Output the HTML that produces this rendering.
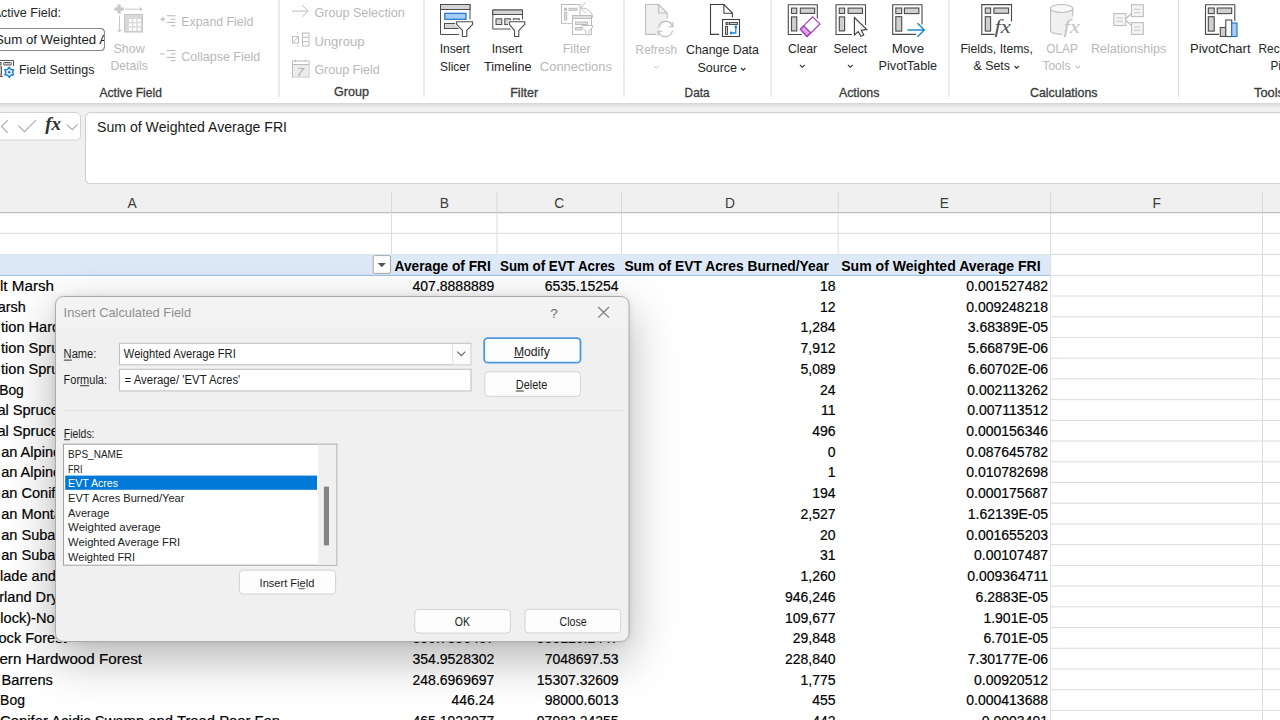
<!DOCTYPE html>
<html><head><meta charset="utf-8"><title>Insert Calculated Field</title>
<style>
html,body{margin:0;padding:0;width:1280px;height:720px;overflow:hidden;background:#fff;}
body{position:relative;font-family:"Liberation Sans", sans-serif;}
.layer{position:absolute;left:0;top:0;width:1280px;height:720px;}
svg text{font-family:"Liberation Sans", sans-serif;}
#shadow{position:absolute;left:55px;top:296px;width:574px;height:346px;border-radius:8px;box-shadow:0 16px 48px rgba(0,0,0,0.30), 0 0 6px rgba(0,0,0,0.10);background:#f0f0f0;}
</style></head><body>
<svg class="layer" width="1280" height="720" viewBox="0 0 1280 720"><rect x="0" y="0" width="1280" height="103" fill="#fff"/><rect x="278.5" y="0" width="1" height="97" fill="#d6d6d6"/><rect x="423.5" y="0" width="1" height="97" fill="#d6d6d6"/><rect x="623.5" y="0" width="1" height="97" fill="#d6d6d6"/><rect x="770.5" y="0" width="1" height="97" fill="#d6d6d6"/><rect x="948.5" y="0" width="1" height="97" fill="#d6d6d6"/><rect x="1178" y="0" width="1" height="97" fill="#d6d6d6"/><text x="-7.3" y="17.4" font-size="13" fill="#262626" textLength="68.3" lengthAdjust="spacingAndGlyphs" >Active Field:</text><rect x="-6" y="28.5" width="110.5" height="22" rx="3.5" fill="#fff" stroke="#8a8a8a" stroke-width="1"/><text x="-5" y="44.4" font-size="13" fill="#1a1a1a" textLength="113" lengthAdjust="spacingAndGlyphs" >Sum of Weighted A</text><rect x="104.5" y="29" width="6" height="21" fill="#fff"/><rect x="-6" y="28.5" width="110.5" height="22" rx="3.5" fill="none" stroke="#8a8a8a" stroke-width="1"/><g fill="none" stroke="#555" stroke-width="1"><path d="M-2 60.5 H13.5 V69"/><path d="M4.4 76.5 H-2"/><rect x="3.5" y="62.5" width="8" height="2.5" rx="1" fill="#d0d0d0"/><rect x="-3" y="62.5" width="4" height="2.5" fill="#d0d0d0"/><rect x="-3" y="67" width="4.5" height="8" fill="#d0d0d0"/></g><rect x="3" y="66" width="12" height="12" fill="#fff"/><polygon points="9.20,67.30 7.55,69.44 4.87,69.80 5.90,72.30 4.87,74.80 7.55,75.16 9.20,77.30 10.85,75.16 13.53,74.80 12.50,72.30 13.53,69.80 10.85,69.44" fill="#fff" stroke="#1a7fd4" stroke-width="1.5" stroke-linejoin="round"/><circle cx="9.2" cy="72.3" r="1.3" fill="#1a7fd4"/><text x="19" y="73.6" font-size="13" fill="#262626" textLength="75.4" lengthAdjust="spacingAndGlyphs" >Field Settings</text><g fill="#c8c8c8"><rect x="117.5" y="4.4" width="3.2" height="9.2"/><rect x="114.4" y="7.4" width="9.4" height="3.2"/><rect x="125.2" y="8.7" width="15" height="1"/><path d="M140 6.8 L142.6 9.2 L140 11.6Z"/><rect x="119" y="15.6" width="1" height="14.5"/><path d="M117 29.8 L119.5 32.4 L122 29.8Z"/></g><g fill="#d9d9d9" stroke="#c4c4c4" stroke-width="1"><rect x="124.5" y="14.5" width="18" height="17.5"/></g><g fill="#fff"><rect x="128.9" y="18.9" width="3" height="3"/><rect x="128.9" y="23.3" width="3" height="3"/><rect x="128.9" y="27.7" width="3" height="3"/><rect x="133.3" y="18.9" width="3" height="3"/><rect x="133.3" y="23.3" width="3" height="3"/><rect x="133.3" y="27.7" width="3" height="3"/><rect x="137.7" y="18.9" width="3" height="3"/><rect x="137.7" y="23.3" width="3" height="3"/><rect x="137.7" y="27.7" width="3" height="3"/></g><text x="113.4" y="53.4" font-size="13" fill="#b8b8b8" textLength="31.3" lengthAdjust="spacingAndGlyphs" >Show</text><text x="110.5" y="70.3" font-size="13" fill="#b8b8b8" textLength="37.3" lengthAdjust="spacingAndGlyphs" >Details</text><g fill="#bcbcbc"><rect x="160.4" y="18.7" width="5" height="1.1"/><rect x="162.4" y="16.7" width="1.1" height="5"/><rect x="166.7" y="15.2" width="8.8" height="1.1"/><rect x="170.9" y="18.7" width="4.6" height="1.1"/><rect x="166.7" y="21.9" width="8.8" height="1.1"/><rect x="170.9" y="25.2" width="4.6" height="1.1"/><rect x="160.2" y="53.4" width="4.3" height="1.1"/><rect x="166.7" y="50" width="8.8" height="1.1"/><rect x="170.9" y="53.4" width="4.6" height="1.1"/><rect x="166.7" y="56.9" width="8.8" height="1.1"/><rect x="170.9" y="60" width="4.6" height="1.1"/></g><text x="181.3" y="26" font-size="13" fill="#b8b8b8" textLength="72" lengthAdjust="spacingAndGlyphs" >Expand Field</text><text x="181.3" y="61.2" font-size="13" fill="#b8b8b8" textLength="79" lengthAdjust="spacingAndGlyphs" >Collapse Field</text><text x="99.5" y="97" font-size="12.2" fill="#3a3a3a" textLength="62.4" lengthAdjust="spacingAndGlyphs" stroke="#3a3a3a" stroke-width="0.3">Active Field</text><g fill="none" stroke="#bdbdbd" stroke-width="1"><path d="M292 11.1 H308.2 M302.2 5.3 L308.2 11.1 L302.2 16.9"/><rect x="292.5" y="36.5" width="6" height="6.5"/><path d="M293 42.5 L298 37"/><path d="M297 33 H299.5 M297 46 H299.5" stroke-dasharray="1.5 1"/><rect x="302.5" y="33" width="6.5" height="13"/><path d="M302.5 37.3 H309 M302.5 41.6 H309"/><rect x="292.5" y="61" width="16.5" height="16"/><path d="M292.5 64.5 H309 M295.5 59.5 V62 M305.5 59.5 V62"/></g><rect x="293" y="65" width="15.5" height="11.5" fill="#ececec"/><text x="296.3" y="75.6" font-size="11" fill="#b0b0b0" font-style="italic" textLength="8" lengthAdjust="spacingAndGlyphs" >7</text><text x="314.4" y="17.4" font-size="13" fill="#b8b8b8" textLength="90.3" lengthAdjust="spacingAndGlyphs" >Group Selection</text><text x="314.4" y="45.8" font-size="13" fill="#b8b8b8" textLength="50" lengthAdjust="spacingAndGlyphs" >Ungroup</text><text x="314.4" y="73.6" font-size="13" fill="#b8b8b8" textLength="65.3" lengthAdjust="spacingAndGlyphs" >Group Field</text><text x="333.9" y="95.8" font-size="12.2" fill="#3a3a3a" textLength="35" lengthAdjust="spacingAndGlyphs" stroke="#3a3a3a" stroke-width="0.3">Group</text><g stroke="#4d4d4d" stroke-width="1"><path d="M459 34.5 H440.5 V4.5 H470 V19.5" fill="#fff"/><rect x="440.5" y="4.5" width="29.5" height="5" fill="#d4d4d4"/><rect x="444.5" y="23.5" width="14" height="5" fill="#d4d4d4"/></g><rect x="444.8" y="13.3" width="21.2" height="6" fill="#a4cdf3" stroke="#1f74cf" stroke-width="1.2"/><path d="M456.6 21.7 H472.6 V24.3 L466.8 30.3 V36.5 H462.4 V30.3 L456.6 24.3 Z" fill="#fff" stroke="#fff" stroke-width="3" stroke-linejoin="round"/><path d="M456.6 21.7 H472.6 V24.3 L466.8 30.3 V36.5 H462.4 V30.3 L456.6 24.3 Z" fill="#fff" stroke="#4d4d4d" stroke-width="1.1" stroke-linejoin="round"/><text x="439.7" y="53.3" font-size="13" fill="#262626" textLength="30.3" lengthAdjust="spacingAndGlyphs" >Insert</text><text x="440" y="70.5" font-size="13" fill="#262626" textLength="30" lengthAdjust="spacingAndGlyphs" >Slicer</text><g stroke="#4d4d4d" stroke-width="1"><path d="M510.5 29 H492.8 V10 H522.5 V19.5" fill="#fff"/><rect x="492.8" y="10" width="29.7" height="4.5" fill="#d4d4d4"/><rect x="496" y="18.8" width="5.8" height="5.7" fill="#d4d4d4"/><rect x="504.8" y="18.8" width="5.5" height="5.7" fill="#d4d4d4"/><rect x="513.3" y="18.8" width="6" height="3" fill="#d4d4d4"/></g><path d="M509.3 21.7 H524.8 V24.3 L518.8 30.3 V36.5 H514.5 V30.3 L509.3 24.3 Z" fill="#fff" stroke="#fff" stroke-width="3" stroke-linejoin="round"/><path d="M509.3 21.7 H524.8 V24.3 L518.8 30.3 V36.5 H514.5 V30.3 L509.3 24.3 Z" fill="#fff" stroke="#4d4d4d" stroke-width="1.1" stroke-linejoin="round"/><text x="491.7" y="53.3" font-size="13" fill="#262626" textLength="30.8" lengthAdjust="spacingAndGlyphs" >Insert</text><text x="484" y="70.5" font-size="13" fill="#262626" textLength="47.6" lengthAdjust="spacingAndGlyphs" >Timeline</text><g stroke="#bdbdbd" stroke-width="1" fill="#fff"><rect x="561.5" y="4.5" width="18.5" height="18.8"/><rect x="564.5" y="8.3" width="2" height="2" fill="#e0e0e0"/><rect x="569" y="8.3" width="8" height="2" fill="#e0e0e0"/><rect x="564.5" y="12.5" width="2.2" height="7.5" fill="#e0e0e0"/><path d="M581 8 A11 11 0 0 1 593 18" fill="none"/><path d="M585.5 2.5 L580.5 8 L585.5 13" fill="none"/><rect x="572.5" y="15.5" width="19" height="19"/><rect x="572.5" y="15.5" width="19" height="3" fill="#e0e0e0"/><rect x="575.5" y="22" width="12" height="2.5" fill="#e0e0e0"/><rect x="575.5" y="27.5" width="6" height="2.5" fill="#e0e0e0"/><path d="M582 25.5 H592.5 V27.5 L589 31 V35 H586 V31 L582 27.5Z"/></g><text x="562.7" y="53.3" font-size="13" fill="#b8b8b8" textLength="27.9" lengthAdjust="spacingAndGlyphs" >Filter</text><text x="539.8" y="70.5" font-size="13" fill="#b8b8b8" textLength="72.2" lengthAdjust="spacingAndGlyphs" >Connections</text><text x="510.2" y="96.8" font-size="12.2" fill="#3a3a3a" textLength="27.9" lengthAdjust="spacingAndGlyphs" stroke="#3a3a3a" stroke-width="0.3">Filter</text><g stroke="#bdbdbd" stroke-width="1.1" fill="none"><path d="M656 34.4 H645.5 V4.5 H658.7 L667.2 13 V18.5" fill="#f0f0f0"/><path d="M658.7 4.5 V13 H667.2"/><path d="M658.5 27.5 A7.2 7.2 0 0 1 672.5 26.5"/><path d="M673 22 V26.8 H668.5"/><path d="M672.5 30.5 A7.2 7.2 0 0 1 658.5 31.5"/><path d="M658 36 V31.2 H662.5"/></g><text x="635.6" y="54.2" font-size="13" fill="#b8b8b8" textLength="41.4" lengthAdjust="spacingAndGlyphs" >Refresh</text><path d="M654 66 L656.4 68.4 L658.8 66" fill="none" stroke="#c4c4c4" stroke-width="1"/><g stroke="#404040" stroke-width="1.1" fill="none"><path d="M719 34.4 H710.5 V4.5 H723.9 L732.4 13 V17.5" fill="#fff"/><path d="M723.9 4.5 V13.3 H732.4"/><rect x="722.5" y="19.5" width="17" height="17" fill="#fff"/><rect x="726" y="22.5" width="2" height="2" fill="#d0d0d0" stroke-width="0.9"/><rect x="729.5" y="22.5" width="8" height="2" fill="#d0d0d0" stroke-width="0.9"/><rect x="725.5" y="26.5" width="2" height="8" fill="#d0d0d0" stroke-width="0.9"/></g><path d="M731.5 33 H735.8 V27.5" fill="none" stroke="#1e88e5" stroke-width="1.3"/><circle cx="735.8" cy="27" r="1.4" fill="#1e88e5"/><circle cx="731.2" cy="33" r="1.4" fill="#1e88e5"/><text x="686" y="54.2" font-size="13" fill="#262626" textLength="72.9" lengthAdjust="spacingAndGlyphs" >Change Data</text><text x="697.5" y="71.5" font-size="13" fill="#262626" textLength="39.5" lengthAdjust="spacingAndGlyphs" >Source</text><path d="M741 68 L743.2 70.2 L745.4 68" fill="none" stroke="#333" stroke-width="1.1"/><text x="684.6" y="96.5" font-size="12.2" fill="#3a3a3a" textLength="25" lengthAdjust="spacingAndGlyphs" stroke="#3a3a3a" stroke-width="0.3">Data</text><g stroke="#4a4a4a" stroke-width="1.1" fill="none"><path d="M802 34.5 H788.3 V4.8 H817.3 V18.5"/><rect x="791.5" y="8.1" width="5.3" height="5.3" fill="#d0d0d0"/><rect x="800.3" y="8.1" width="14.4" height="5.3" fill="#d0d0d0"/><rect x="791.5" y="16.9" width="5.3" height="14" fill="#d0d0d0"/></g><path d="M812.6 16.9 L820 23.9 L807 36.6 L800.3 29.2 Z" fill="#fff" stroke="#a33ab8" stroke-width="1.2"/><path d="M803.8 26 L810.5 32.6 L807 36.3 L800.5 29.3 Z" fill="#dca6e6" stroke="#a33ab8" stroke-width="1.2"/><text x="788" y="53.4" font-size="13" fill="#262626" textLength="29.1" lengthAdjust="spacingAndGlyphs" >Clear</text><path d="M800 65 L802.3 67.3 L804.6 65" fill="none" stroke="#333" stroke-width="1.1"/><g stroke="#4a4a4a" stroke-width="1.1" fill="none"><path d="M852 34.5 H836 V4.8 H865.5 V25"/><rect x="839.3" y="8.1" width="5.3" height="5.3" fill="#d0d0d0"/><rect x="848.1" y="8.1" width="14.4" height="5.3" fill="#d0d0d0"/><rect x="839.3" y="16.9" width="5.3" height="14" fill="#d0d0d0"/><path d="M854.4 17.6 V35 L858.2 31.6 L861 36.4 L863.8 35 L861.3 30.2 L866.8 29.6 Z" fill="#f8f8f8" stroke="#3a3a3a"/></g><text x="833.6" y="53.4" font-size="13" fill="#262626" textLength="33.4" lengthAdjust="spacingAndGlyphs" >Select</text><path d="M848 65 L850.3 67.3 L852.6 65" fill="none" stroke="#333" stroke-width="1.1"/><g stroke="#4a4a4a" stroke-width="1.1" fill="none"><path d="M916 34.4 H892.7 V4.8 H922 V24.4"/><rect x="895.8" y="8" width="5.9" height="5.6" fill="#d0d0d0"/><rect x="904.4" y="8" width="14.5" height="5.6" fill="#d0d0d0"/><rect x="895.8" y="16.7" width="5.9" height="14.4" fill="#d0d0d0"/></g><path d="M907.5 30 H924 M917.5 23.3 L924.3 30 L917.5 36.7" fill="none" stroke="#1c8ad6" stroke-width="1.5"/><text x="891.7" y="53.4" font-size="13" fill="#262626" textLength="32.3" lengthAdjust="spacingAndGlyphs" >Move</text><text x="878.6" y="70.3" font-size="13" fill="#262626" textLength="58.5" lengthAdjust="spacingAndGlyphs" >PivotTable</text><text x="838.9" y="97" font-size="12.2" fill="#3a3a3a" textLength="40.5" lengthAdjust="spacingAndGlyphs" stroke="#3a3a3a" stroke-width="0.3">Actions</text><g stroke="#4a4a4a" stroke-width="1.1" fill="none"><path d="M994.5 34.4 H981.8 V4.6 H1011.5 V21.5"/><rect x="985.3" y="8" width="5.3" height="5.3" fill="#d0d0d0"/><rect x="993.9" y="8" width="14.7" height="5.3" fill="#d0d0d0"/><rect x="985.3" y="16.7" width="5.3" height="14.4" fill="#d0d0d0"/></g><rect x="993" y="20" width="20" height="17" fill="#fff" opacity="0"/><text x="994.5" y="33" font-size="19" fill="#505050" font-style="italic" textLength="16.5" lengthAdjust="spacingAndGlyphs" style='font-family:"Liberation Serif", serif' >fx</text><text x="960.4" y="53.4" font-size="13" fill="#262626" textLength="72.4" lengthAdjust="spacingAndGlyphs" >Fields, Items,</text><text x="973.5" y="70.3" font-size="13" fill="#262626" textLength="36.5" lengthAdjust="spacingAndGlyphs" >&amp; Sets</text><path d="M1014.5 66 L1016.7 68.2 L1018.9 66" fill="none" stroke="#333" stroke-width="1.1"/><path d="M1050.5 8.5 H1072.8 V18 L1063 34.6 A11.2 3.5 0 0 1 1050.5 30.5 Z" fill="#f0f0f0"/><g stroke="#bdbdbd" stroke-width="1.1" fill="none"><path d="M1050.5 8.5 V30.5 A11.2 3.8 0 0 0 1062.5 34.3 M1072.8 8.5 V16.5"/><ellipse cx="1061.6" cy="8.5" rx="11.2" ry="4" fill="#f8f8f8"/></g><text x="1063.5" y="33" font-size="19" fill="#c4c4c4" font-style="italic" textLength="16.5" lengthAdjust="spacingAndGlyphs" style='font-family:"Liberation Serif", serif' >fx</text><text x="1046.2" y="53.4" font-size="13" fill="#b8b8b8" textLength="31.6" lengthAdjust="spacingAndGlyphs" >OLAP</text><text x="1042.4" y="70.3" font-size="13" fill="#b8b8b8" textLength="28" lengthAdjust="spacingAndGlyphs" >Tools</text><path d="M1075.5 66 L1077.7 68.2 L1079.9 66" fill="none" stroke="#c4c4c4" stroke-width="1.1"/><g stroke="#bdbdbd" stroke-width="1.1" fill="#f4f4f4"><rect x="1113.8" y="13.5" width="12" height="12"/><rect x="1131.5" y="4.8" width="11.8" height="11.8"/><rect x="1131.5" y="22.6" width="11.8" height="11.8"/><path d="M1126 18.5 L1131.5 13.5 M1126 20.5 L1131.5 25.5" fill="none"/></g><g fill="#c8c8c8"><rect x="1116.5" y="17.5" width="6.5" height="1"/><rect x="1116.5" y="20.8" width="6.5" height="1"/><rect x="1134" y="8.8" width="6.5" height="1"/><rect x="1134" y="12.1" width="6.5" height="1"/><rect x="1134" y="26.5" width="6.5" height="1"/><rect x="1134" y="29.8" width="6.5" height="1"/></g><text x="1090.9" y="53.4" font-size="13" fill="#b8b8b8" textLength="75.5" lengthAdjust="spacingAndGlyphs" >Relationships</text><text x="1030" y="97" font-size="12.2" fill="#3a3a3a" textLength="67.5" lengthAdjust="spacingAndGlyphs" stroke="#3a3a3a" stroke-width="0.3">Calculations</text><g stroke="#4a4a4a" stroke-width="1.1" fill="none"><path d="M1219 34.4 H1205.5 V4.8 H1234.8 V21"/><rect x="1208.3" y="8" width="5.9" height="5.6" fill="#d0d0d0"/><rect x="1217.2" y="8" width="14.5" height="5.6" fill="#d0d0d0"/><rect x="1208.3" y="16.7" width="5.9" height="14.4" fill="#d0d0d0"/><rect x="1220.3" y="27.5" width="5.5" height="9" fill="#d0d0d0"/><rect x="1225.8" y="20" width="5.9" height="16.5" fill="#fff"/></g><rect x="1231.7" y="23" width="5.3" height="13.5" fill="#a5cdf5" stroke="#1f74cf" stroke-width="1.1"/><text x="1190" y="53.4" font-size="13" fill="#262626" textLength="60.5" lengthAdjust="spacingAndGlyphs" >PivotChart</text><text x="1258.6" y="53.4" font-size="13" fill="#262626" textLength="80" lengthAdjust="spacingAndGlyphs" >Recommended</text><text x="1270.5" y="70.3" font-size="13" fill="#262626" textLength="60" lengthAdjust="spacingAndGlyphs" >PivotTables</text><text x="1254" y="97" font-size="12.2" fill="#3a3a3a" textLength="30" lengthAdjust="spacingAndGlyphs" stroke="#3a3a3a" stroke-width="0.3">Tools</text><defs><linearGradient id="rs" x1="0" y1="0" x2="0" y2="1"><stop offset="0" stop-color="#d4d4d4"/><stop offset="1" stop-color="#f0f0f0"/></linearGradient></defs><rect x="0" y="103" width="1280" height="110" fill="#f0f0f0"/><rect x="0" y="103" width="1280" height="5" fill="url(#rs)"/><rect x="-6" y="112.5" width="86.5" height="27.5" rx="4.5" fill="#fff" stroke="#d2d2d2" stroke-width="1"/><g stroke="#a8a8a8" stroke-width="1.1" fill="none"><path d="M7.7 120.1 L1.5 126.5 L7.7 132.8"/><path d="M18.3 125.7 L24.4 131.7 L35.9 120.1"/><path d="M66.8 124.3 L72.2 129.7 L77.6 124.3"/></g><text x="45.3" y="130.4" font-size="18.5" fill="#303030" font-weight="bold" font-style="italic" textLength="15.8" lengthAdjust="spacingAndGlyphs" style='font-family:"Liberation Serif", serif' >fx</text><rect x="85.5" y="112.7" width="1205" height="71" rx="5" fill="#fff" stroke="#cccccc" stroke-width="1"/><text x="97" y="132" font-size="14.6" fill="#1a1a1a" textLength="190" lengthAdjust="spacingAndGlyphs" >Sum of Weighted Average FRI</text><rect x="0" y="184.2" width="1280" height="28.3" fill="#f0f0f0"/><rect x="391.0" y="192" width="1" height="20.5" fill="#dadada"/><rect x="496.5" y="192" width="1" height="20.5" fill="#dadada"/><rect x="621.0" y="192" width="1" height="20.5" fill="#dadada"/><rect x="837.7" y="192" width="1" height="20.5" fill="#dadada"/><rect x="1050.1" y="192" width="1" height="20.5" fill="#dadada"/><rect x="1262.0" y="192" width="1" height="20.5" fill="#dadada"/><text x="132" y="208.2" font-size="13.8" fill="#3c3c3c" text-anchor="middle" >A</text><text x="444.3" y="208.2" font-size="13.8" fill="#3c3c3c" text-anchor="middle" >B</text><text x="559.3" y="208.2" font-size="13.8" fill="#3c3c3c" text-anchor="middle" >C</text><text x="730" y="208.2" font-size="13.8" fill="#3c3c3c" text-anchor="middle" >D</text><text x="944.4" y="208.2" font-size="13.8" fill="#3c3c3c" text-anchor="middle" >E</text><text x="1156.6" y="208.2" font-size="13.8" fill="#3c3c3c" text-anchor="middle" >F</text><rect x="0" y="212" width="1280" height="1.5" fill="#bdbdbd"/><rect x="0" y="213.5" width="1280" height="507" fill="#fff"/><rect x="0" y="232.8" width="1280" height="1" fill="#dcdcdc"/><rect x="0" y="254" width="1280" height="1" fill="#dcdcdc"/><rect x="391.0" y="213.5" width="1" height="40.5" fill="#dcdcdc"/><rect x="496.5" y="213.5" width="1" height="40.5" fill="#dcdcdc"/><rect x="621.0" y="213.5" width="1" height="40.5" fill="#dcdcdc"/><rect x="837.7" y="213.5" width="1" height="40.5" fill="#dcdcdc"/><rect x="1050.1" y="213.5" width="1" height="40.5" fill="#dcdcdc"/><rect x="1262.0" y="213.5" width="1" height="40.5" fill="#dcdcdc"/><rect x="1050.1" y="274.80" width="230" height="1" fill="#dcdcdc"/><rect x="1050.1" y="295.52" width="230" height="1" fill="#dcdcdc"/><rect x="1050.1" y="316.24" width="230" height="1" fill="#dcdcdc"/><rect x="1050.1" y="336.96" width="230" height="1" fill="#dcdcdc"/><rect x="1050.1" y="357.68" width="230" height="1" fill="#dcdcdc"/><rect x="1050.1" y="378.40" width="230" height="1" fill="#dcdcdc"/><rect x="1050.1" y="399.12" width="230" height="1" fill="#dcdcdc"/><rect x="1050.1" y="419.84" width="230" height="1" fill="#dcdcdc"/><rect x="1050.1" y="440.56" width="230" height="1" fill="#dcdcdc"/><rect x="1050.1" y="461.28" width="230" height="1" fill="#dcdcdc"/><rect x="1050.1" y="482.00" width="230" height="1" fill="#dcdcdc"/><rect x="1050.1" y="502.72" width="230" height="1" fill="#dcdcdc"/><rect x="1050.1" y="523.44" width="230" height="1" fill="#dcdcdc"/><rect x="1050.1" y="544.16" width="230" height="1" fill="#dcdcdc"/><rect x="1050.1" y="564.88" width="230" height="1" fill="#dcdcdc"/><rect x="1050.1" y="585.60" width="230" height="1" fill="#dcdcdc"/><rect x="1050.1" y="606.32" width="230" height="1" fill="#dcdcdc"/><rect x="1050.1" y="627.04" width="230" height="1" fill="#dcdcdc"/><rect x="1050.1" y="647.76" width="230" height="1" fill="#dcdcdc"/><rect x="1050.1" y="668.48" width="230" height="1" fill="#dcdcdc"/><rect x="1050.1" y="689.20" width="230" height="1" fill="#dcdcdc"/><rect x="1050.1" y="709.92" width="230" height="1" fill="#dcdcdc"/><rect x="1050.1" y="730.64" width="230" height="1" fill="#dcdcdc"/><rect x="1050.1" y="751.36" width="230" height="1" fill="#dcdcdc"/><rect x="1050.1" y="254" width="1" height="470" fill="#dcdcdc"/><rect x="1262.0" y="254" width="1" height="470" fill="#dcdcdc"/><rect x="0" y="254.5" width="1050.1" height="20.3" fill="#dde9f6"/><rect x="0" y="274.8" width="1050.1" height="1.2" fill="#9dc3e6"/><rect x="373.2" y="255.6" width="17.3" height="17.8" rx="1.5" fill="#fff" stroke="#a8a8a8" stroke-width="1"/><path d="M377.8 263 H385.8 L381.8 267.2 Z" fill="#555"/><text x="394.6" y="270.5" font-size="14" fill="#000" font-weight="bold" textLength="96.2" lengthAdjust="spacingAndGlyphs" >Average of FRI</text><text x="500" y="270.5" font-size="14" fill="#000" font-weight="bold" textLength="115" lengthAdjust="spacingAndGlyphs" >Sum of EVT Acres</text><text x="624.4" y="270.5" font-size="14" fill="#000" font-weight="bold" textLength="204.4" lengthAdjust="spacingAndGlyphs" >Sum of EVT Acres Burned/Year</text><text x="841.2" y="270.5" font-size="14" fill="#000" font-weight="bold" textLength="199.5" lengthAdjust="spacingAndGlyphs" >Sum of Weighted Average FRI</text><text x="0.0" y="291.0" font-size="14" fill="#000" textLength="54.0" lengthAdjust="spacingAndGlyphs" stroke="#000" stroke-width="0.18">lt Marsh</text><text x="494.3" y="291.0" font-size="14" fill="#000" text-anchor="end" stroke="#000" stroke-width="0.18">407.8888889</text><text x="618.6" y="291.0" font-size="14" fill="#000" text-anchor="end" stroke="#000" stroke-width="0.18">6535.15254</text><text x="835.6" y="291.0" font-size="14" fill="#000" text-anchor="end" stroke="#000" stroke-width="0.18">18</text><text x="1048" y="291.0" font-size="14" fill="#000" text-anchor="end" stroke="#000" stroke-width="0.18">0.001527482</text><text x="-2.2" y="311.72" font-size="14" fill="#000" textLength="28.0" lengthAdjust="spacingAndGlyphs" stroke="#000" stroke-width="0.18">arsh</text><text x="835.6" y="311.72" font-size="14" fill="#000" text-anchor="end" stroke="#000" stroke-width="0.18">12</text><text x="1048" y="311.72" font-size="14" fill="#000" text-anchor="end" stroke="#000" stroke-width="0.18">0.009248218</text><text x="1.0" y="332.44" font-size="14" fill="#000" textLength="93.89" lengthAdjust="spacingAndGlyphs" stroke="#000" stroke-width="0.18">tion Hardwood</text><text x="835.6" y="332.44" font-size="14" fill="#000" text-anchor="end" stroke="#000" stroke-width="0.18">1,284</text><text x="1048" y="332.44" font-size="14" fill="#000" text-anchor="end" stroke="#000" stroke-width="0.18">3.68389E-05</text><text x="1.0" y="353.16" font-size="14" fill="#000" textLength="95.48" lengthAdjust="spacingAndGlyphs" stroke="#000" stroke-width="0.18">tion Spruce-Fir</text><text x="835.6" y="353.16" font-size="14" fill="#000" text-anchor="end" stroke="#000" stroke-width="0.18">7,912</text><text x="1048" y="353.16" font-size="14" fill="#000" text-anchor="end" stroke="#000" stroke-width="0.18">5.66879E-06</text><text x="1.0" y="373.88" font-size="14" fill="#000" textLength="95.48" lengthAdjust="spacingAndGlyphs" stroke="#000" stroke-width="0.18">tion Spruce-Fir</text><text x="835.6" y="373.88" font-size="14" fill="#000" text-anchor="end" stroke="#000" stroke-width="0.18">5,089</text><text x="1048" y="373.88" font-size="14" fill="#000" text-anchor="end" stroke="#000" stroke-width="0.18">6.60702E-06</text><text x="-0.8" y="394.6" font-size="14" fill="#000" textLength="24.6" lengthAdjust="spacingAndGlyphs" stroke="#000" stroke-width="0.18">Bog</text><text x="835.6" y="394.6" font-size="14" fill="#000" text-anchor="end" stroke="#000" stroke-width="0.18">24</text><text x="1048" y="394.6" font-size="14" fill="#000" text-anchor="end" stroke="#000" stroke-width="0.18">0.002113262</text><text x="-2.6" y="415.32" font-size="14" fill="#000" textLength="83.34" lengthAdjust="spacingAndGlyphs" stroke="#000" stroke-width="0.18">al Spruce-Fir</text><text x="835.6" y="415.32" font-size="14" fill="#000" text-anchor="end" stroke="#000" stroke-width="0.18">11</text><text x="1048" y="415.32" font-size="14" fill="#000" text-anchor="end" stroke="#000" stroke-width="0.18">0.007113512</text><text x="-2.6" y="436.04" font-size="14" fill="#000" textLength="83.34" lengthAdjust="spacingAndGlyphs" stroke="#000" stroke-width="0.18">al Spruce-Fir</text><text x="835.6" y="436.04" font-size="14" fill="#000" text-anchor="end" stroke="#000" stroke-width="0.18">496</text><text x="1048" y="436.04" font-size="14" fill="#000" text-anchor="end" stroke="#000" stroke-width="0.18">0.000156346</text><text x="1.2" y="456.76" font-size="14" fill="#000" textLength="59.91" lengthAdjust="spacingAndGlyphs" stroke="#000" stroke-width="0.18">an Alpine</text><text x="835.6" y="456.76" font-size="14" fill="#000" text-anchor="end" stroke="#000" stroke-width="0.18">0</text><text x="1048" y="456.76" font-size="14" fill="#000" text-anchor="end" stroke="#000" stroke-width="0.18">0.087645782</text><text x="1.2" y="477.48" font-size="14" fill="#000" textLength="59.91" lengthAdjust="spacingAndGlyphs" stroke="#000" stroke-width="0.18">an Alpine</text><text x="835.6" y="477.48" font-size="14" fill="#000" text-anchor="end" stroke="#000" stroke-width="0.18">1</text><text x="1048" y="477.48" font-size="14" fill="#000" text-anchor="end" stroke="#000" stroke-width="0.18">0.010782698</text><text x="1.2" y="498.2" font-size="14" fill="#000" textLength="67.18" lengthAdjust="spacingAndGlyphs" stroke="#000" stroke-width="0.18">an Conifer</text><text x="835.6" y="498.2" font-size="14" fill="#000" text-anchor="end" stroke="#000" stroke-width="0.18">194</text><text x="1048" y="498.2" font-size="14" fill="#000" text-anchor="end" stroke="#000" stroke-width="0.18">0.000175687</text><text x="1.2" y="518.92" font-size="14" fill="#000" textLength="76.9" lengthAdjust="spacingAndGlyphs" stroke="#000" stroke-width="0.18">an Montane</text><text x="835.6" y="518.92" font-size="14" fill="#000" text-anchor="end" stroke="#000" stroke-width="0.18">2,527</text><text x="1048" y="518.92" font-size="14" fill="#000" text-anchor="end" stroke="#000" stroke-width="0.18">1.62139E-05</text><text x="1.2" y="539.64" font-size="14" fill="#000" textLength="85.01" lengthAdjust="spacingAndGlyphs" stroke="#000" stroke-width="0.18">an Subalpine</text><text x="835.6" y="539.64" font-size="14" fill="#000" text-anchor="end" stroke="#000" stroke-width="0.18">20</text><text x="1048" y="539.64" font-size="14" fill="#000" text-anchor="end" stroke="#000" stroke-width="0.18">0.001655203</text><text x="1.2" y="560.36" font-size="14" fill="#000" textLength="85.01" lengthAdjust="spacingAndGlyphs" stroke="#000" stroke-width="0.18">an Subalpine</text><text x="835.6" y="560.36" font-size="14" fill="#000" text-anchor="end" stroke="#000" stroke-width="0.18">31</text><text x="1048" y="560.36" font-size="14" fill="#000" text-anchor="end" stroke="#000" stroke-width="0.18">0.00107487</text><text x="0.0" y="581.08" font-size="14" fill="#000" textLength="110.89" lengthAdjust="spacingAndGlyphs" stroke="#000" stroke-width="0.18">lade and Barrens</text><text x="835.6" y="581.08" font-size="14" fill="#000" text-anchor="end" stroke="#000" stroke-width="0.18">1,260</text><text x="1048" y="581.08" font-size="14" fill="#000" text-anchor="end" stroke="#000" stroke-width="0.18">0.009364711</text><text x="-0.8" y="601.8" font-size="14" fill="#000" textLength="104.37" lengthAdjust="spacingAndGlyphs" stroke="#000" stroke-width="0.18">rland Dry Forest</text><text x="835.6" y="601.8" font-size="14" fill="#000" text-anchor="end" stroke="#000" stroke-width="0.18">946,246</text><text x="1048" y="601.8" font-size="14" fill="#000" text-anchor="end" stroke="#000" stroke-width="0.18">6.2883E-05</text><text x="0.3" y="622.52" font-size="14" fill="#000" textLength="92.24" lengthAdjust="spacingAndGlyphs" stroke="#000" stroke-width="0.18">lock)-Northern</text><text x="835.6" y="622.52" font-size="14" fill="#000" text-anchor="end" stroke="#000" stroke-width="0.18">109,677</text><text x="1048" y="622.52" font-size="14" fill="#000" text-anchor="end" stroke="#000" stroke-width="0.18">1.901E-05</text><text x="-1.5" y="643.24" font-size="14" fill="#000" textLength="67.97" lengthAdjust="spacingAndGlyphs" stroke="#000" stroke-width="0.18">ock Forest</text><text x="494.3" y="643.24" font-size="14" fill="#000" text-anchor="end" stroke="#000" stroke-width="0.18">356.7856407</text><text x="618.6" y="643.24" font-size="14" fill="#000" text-anchor="end" stroke="#000" stroke-width="0.18">985126.2447</text><text x="835.6" y="643.24" font-size="14" fill="#000" text-anchor="end" stroke="#000" stroke-width="0.18">29,848</text><text x="1048" y="643.24" font-size="14" fill="#000" text-anchor="end" stroke="#000" stroke-width="0.18">6.701E-05</text><text x="-0.6" y="663.96" font-size="14" fill="#000" textLength="142.6" lengthAdjust="spacingAndGlyphs" stroke="#000" stroke-width="0.18">ern Hardwood Forest</text><text x="494.3" y="663.96" font-size="14" fill="#000" text-anchor="end" stroke="#000" stroke-width="0.18">354.9528302</text><text x="618.6" y="663.96" font-size="14" fill="#000" text-anchor="end" stroke="#000" stroke-width="0.18">7048697.53</text><text x="835.6" y="663.96" font-size="14" fill="#000" text-anchor="end" stroke="#000" stroke-width="0.18">228,840</text><text x="1048" y="663.96" font-size="14" fill="#000" text-anchor="end" stroke="#000" stroke-width="0.18">7.30177E-06</text><text x="1.6" y="684.68" font-size="14" fill="#000" textLength="51.3" lengthAdjust="spacingAndGlyphs" stroke="#000" stroke-width="0.18">Barrens</text><text x="494.3" y="684.68" font-size="14" fill="#000" text-anchor="end" stroke="#000" stroke-width="0.18">248.6969697</text><text x="618.6" y="684.68" font-size="14" fill="#000" text-anchor="end" stroke="#000" stroke-width="0.18">15307.32609</text><text x="835.6" y="684.68" font-size="14" fill="#000" text-anchor="end" stroke="#000" stroke-width="0.18">1,775</text><text x="1048" y="684.68" font-size="14" fill="#000" text-anchor="end" stroke="#000" stroke-width="0.18">0.00920512</text><text x="0.1" y="705.4" font-size="14" fill="#000" textLength="24.8" lengthAdjust="spacingAndGlyphs" stroke="#000" stroke-width="0.18">Bog</text><text x="494.3" y="705.4" font-size="14" fill="#000" text-anchor="end" stroke="#000" stroke-width="0.18">446.24</text><text x="618.6" y="705.4" font-size="14" fill="#000" text-anchor="end" stroke="#000" stroke-width="0.18">98000.6013</text><text x="835.6" y="705.4" font-size="14" fill="#000" text-anchor="end" stroke="#000" stroke-width="0.18">455</text><text x="1048" y="705.4" font-size="14" fill="#000" text-anchor="end" stroke="#000" stroke-width="0.18">0.000413688</text><text x="0.1" y="726.12" font-size="14" fill="#000" textLength="280.0" lengthAdjust="spacingAndGlyphs" stroke="#000" stroke-width="0.18">Conifer Acidic Swamp and Tread Poor Fen</text><text x="494.3" y="726.12" font-size="14" fill="#000" text-anchor="end" stroke="#000" stroke-width="0.18">465.1923077</text><text x="618.6" y="726.12" font-size="14" fill="#000" text-anchor="end" stroke="#000" stroke-width="0.18">97983.24255</text><text x="835.6" y="726.12" font-size="14" fill="#000" text-anchor="end" stroke="#000" stroke-width="0.18">442</text><text x="1048" y="726.12" font-size="14" fill="#000" text-anchor="end" stroke="#000" stroke-width="0.18">0.0003491</text></svg>
<div id="shadow"></div>
<svg class="layer" width="1280" height="720" viewBox="0 0 1280 720"><rect x="55.5" y="296.5" width="573" height="345" rx="8" fill="#f0f0f0"/><path d="M55.5 328.5 V304.5 A8 8 0 0 1 63.5 296.5 H620.5 A8 8 0 0 1 628.5 304.5 V328.5 Z" fill="#f3f3f3"/><rect x="55.5" y="296.5" width="573.5" height="345" rx="8" fill="none" stroke="#aaaaaa" stroke-width="1"/><text x="63.6" y="317.4" font-size="13.2" fill="#8f8f8f" textLength="127.5" lengthAdjust="spacingAndGlyphs" >Insert Calculated Field</text><text x="550.3" y="317.6" font-size="13.5" fill="#6a6a6a" >?</text><path d="M598.2 307 L609 317.6 M609 307 L598.2 317.6" stroke="#777" stroke-width="1.1"/><text x="63.6" y="358.3" font-size="12" fill="#1b1b1b" textLength="32.8" lengthAdjust="spacingAndGlyphs" >Name:</text><rect x="63.8" y="359.6" width="8" height="1" fill="#333"/><rect x="119.5" y="343.3" width="351.3" height="21.5" fill="#fff" stroke="#c2c2c2" stroke-width="1.1"/><rect x="452.4" y="344" width="18" height="20.3" fill="#fbfbfb"/><rect x="452.2" y="344" width="0.9" height="20.3" fill="#e2e2e2"/><path d="M457.3 351.6 L461.3 355.6 L465.3 351.6" fill="none" stroke="#666" stroke-width="1.1"/><text x="123.8" y="357.6" font-size="12" fill="#1b1b1b" textLength="112" lengthAdjust="spacingAndGlyphs" >Weighted Average FRI</text><text x="63.6" y="384.2" font-size="12" fill="#1b1b1b" textLength="43.4" lengthAdjust="spacingAndGlyphs" >Formula:</text><rect x="80.1" y="385.2" width="9" height="1" fill="#333"/><rect x="119.5" y="369.3" width="351.5" height="21.6" fill="#fff" stroke="#c2c2c2" stroke-width="1.1"/><text x="124.5" y="383.9" font-size="12" fill="#1b1b1b" textLength="115.8" lengthAdjust="spacingAndGlyphs" >= Average/ &#x27;EVT Acres&#x27;</text><rect x="484.2" y="338.1" width="96.3" height="24.6" rx="3.5" fill="#fdfdfd" stroke="#4d98e0" stroke-width="1.8"/><text x="513.9" y="355.6" font-size="12" fill="#1b1b1b" textLength="35.9" lengthAdjust="spacingAndGlyphs" >Modify</text><rect x="513.9" y="357" width="9.5" height="1" fill="#333"/><rect x="484.9" y="371.8" width="95.5" height="24.5" rx="3.5" fill="#fdfdfd" stroke="#d3d3d3" stroke-width="1"/><text x="515.8" y="388.9" font-size="12" fill="#1b1b1b" textLength="31.6" lengthAdjust="spacingAndGlyphs" >Delete</text><rect x="515.8" y="390.5" width="8" height="1" fill="#333"/><rect x="63" y="410" width="560" height="1" fill="#e0e0e0"/><text x="63.8" y="437.8" font-size="12" fill="#1b1b1b" textLength="30.7" lengthAdjust="spacingAndGlyphs" >Fields:</text><rect x="63.9" y="439.2" width="6" height="1" fill="#333"/><rect x="63.5" y="444.2" width="273.3" height="121" fill="#fff" stroke="#a6a6a6" stroke-width="1.1"/><rect x="318" y="444.8" width="18.3" height="120" fill="#f0f0f0"/><rect x="323.9" y="486.6" width="5.1" height="58.8" fill="#858585"/><rect x="65.2" y="475.6" width="251.8" height="14.2" fill="#0078d7"/><text x="68.1" y="457.8" font-size="11.8" fill="#1b1b1b" textLength="54.5" lengthAdjust="spacingAndGlyphs" >BPS_NAME</text><text x="68.1" y="472.53" font-size="11.8" fill="#1b1b1b" textLength="14.5" lengthAdjust="spacingAndGlyphs" >FRI</text><text x="68.1" y="487.26" font-size="11.8" fill="#fff" textLength="50" lengthAdjust="spacingAndGlyphs" >EVT Acres</text><text x="68.1" y="501.99" font-size="11.8" fill="#1b1b1b" textLength="116.3" lengthAdjust="spacingAndGlyphs" >EVT Acres Burned/Year</text><text x="68.1" y="516.72" font-size="11.8" fill="#1b1b1b" textLength="41.3" lengthAdjust="spacingAndGlyphs" >Average</text><text x="68.1" y="531.45" font-size="11.8" fill="#1b1b1b" textLength="92.5" lengthAdjust="spacingAndGlyphs" >Weighted average</text><text x="68.1" y="546.18" font-size="11.8" fill="#1b1b1b" textLength="112" lengthAdjust="spacingAndGlyphs" >Weighted Average FRI</text><text x="68.1" y="560.91" font-size="11.8" fill="#1b1b1b" textLength="67" lengthAdjust="spacingAndGlyphs" >Weighted FRI</text><rect x="239.4" y="570.2" width="96.2" height="23.8" rx="3.5" fill="#fdfdfd" stroke="#d0d0d0" stroke-width="1"/><text x="259.6" y="586.8" font-size="11.8" fill="#1b1b1b" textLength="54.7" lengthAdjust="spacingAndGlyphs" >Insert Field</text><rect x="298.7" y="588.2" width="6" height="1" fill="#555"/><rect x="414.8" y="609.5" width="95.6" height="23.6" rx="3.5" fill="#fdfdfd" stroke="#d3d3d3" stroke-width="1"/><text x="454.8" y="625.9" font-size="12" fill="#1b1b1b" textLength="15.2" lengthAdjust="spacingAndGlyphs" >OK</text><rect x="525" y="609.3" width="95.6" height="23.6" rx="3.5" fill="#fdfdfd" stroke="#d3d3d3" stroke-width="1"/><text x="559.5" y="625.8" font-size="12" fill="#1b1b1b" textLength="27.1" lengthAdjust="spacingAndGlyphs" >Close</text></svg>
</body></html>
